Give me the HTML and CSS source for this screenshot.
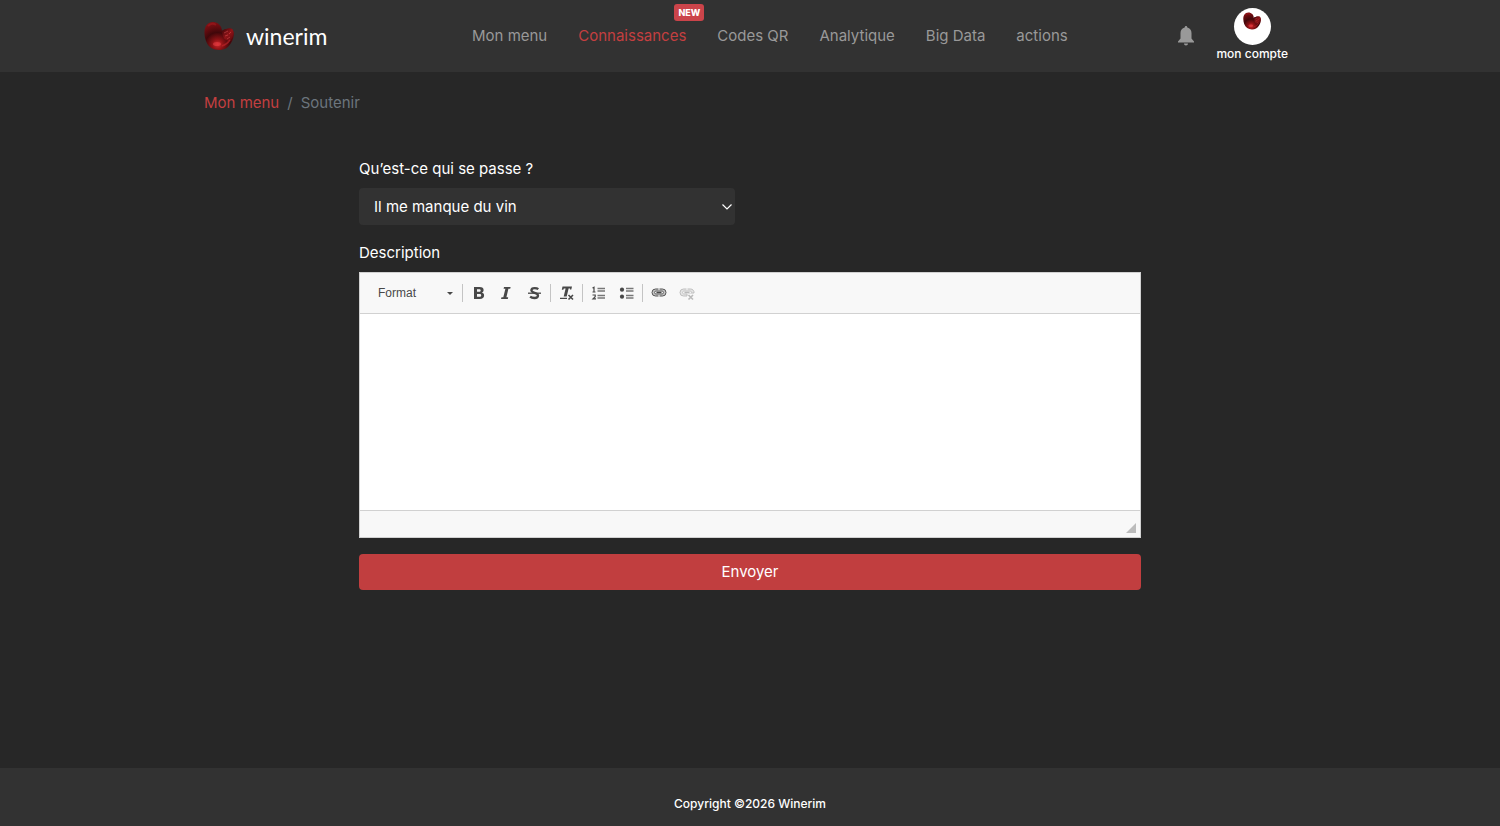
FILE: index.html
```html
<!DOCTYPE html>
<html lang="fr">
<head>
    <meta charset="UTF-8">
    <meta name="viewport" content="width=device-width, initial-scale=1.0">
    <title>Winerim - Soutenir</title>
    <link rel="stylesheet" href="styles.css">
</head>
<body>
    <!-- Shared logo drawing -->
    <svg class="defs" width="0" height="0" aria-hidden="true">
        <defs>
            <radialGradient id="lobe" cx="0.45" cy="0.8" r="0.85">
                <stop offset="0" stop-color="#d0282c"/>
                <stop offset="0.22" stop-color="#8c1215"/>
                <stop offset="0.5" stop-color="#40070a"/>
                <stop offset="0.8" stop-color="#6e0d11"/>
                <stop offset="1" stop-color="#8a1216"/>
            </radialGradient>
            <linearGradient id="side" x1="0" y1="0" x2="1" y2="1">
                <stop offset="0" stop-color="#3a0508"/>
                <stop offset="0.5" stop-color="#8f1418"/>
                <stop offset="1" stop-color="#5a080b"/>
            </linearGradient>
            <symbol id="logo" viewBox="0 0 30 30">
                <path fill="url(#lobe)" d="M9 1C14 1 18 5 18 10C20 8 25 7 28 8C31 11 30 18 27 22C24 27 20 29 15 29C9 29 4 26 2 20C-1 12 0 1 9 1Z"/>
                <path fill="url(#side)" d="M18 10C20 8 25 7 28 8C31 11 29 17 26 20C22 20 18 17 18 10Z"/>
                <path fill="none" stroke="#e05053" stroke-width="1" opacity="0.5" d="M20 12L24 10M21 15L24 14M25 13L27 11M23 18L26 16"/>
                <path fill="none" stroke="#a81c20" stroke-width="2" opacity="0.5" d="M4 5C6 3 9 2 12 4"/>
                <ellipse cx="13" cy="23" rx="4" ry="2" fill="#f0444a" opacity="0.5"/>
                <path fill="none" stroke="#c4262b" stroke-width="1.500" opacity="0.6" d="M18 25C21 24 24 22 26 19"/>
            </symbol>
        </defs>
    </svg>

    <header class="topbar">
        <div class="container topbar-inner">
            <a class="brand" href="#">
                <svg class="brand-logo" aria-hidden="true"><use href="#logo"/></svg>
                <span>winerim</span>
            </a>
            <nav class="menu">
                <a href="#">Mon menu</a>
                <a class="active" href="#">Connaissances<span class="badge">NEW</span></a>
                <a href="#">Codes QR</a>
                <a href="#">Analytique</a>
                <a href="#">Big Data</a>
                <a href="#">actions</a>
            </nav>
            <div class="user">
                <button class="bell" type="button" aria-label="Notifications">
                    <svg width="16" height="20" viewBox="0 0 16 20" fill="#999" aria-hidden="true">
                        <path d="M8 0C8.900 0 9.300 .6 9.300 1.500C12 2 13.500 4.300 13.500 7V12.500L16 15.500V16.500H0V15.500L2.500 12.500V7C2.500 4.300 4 2 6.700 1.500C6.700 .6 7.100 0 8 0ZM6 17.500H10C10 18.800 9.200 19.500 8 19.500S6 18.800 6 17.500Z"/>
                    </svg>
                </button>
                <a class="account" href="#">
                    <span class="avatar"><svg aria-hidden="true"><use href="#logo"/></svg></span>
                    <span>mon compte</span>
                </a>
            </div>
        </div>
    </header>

    <main class="container">
        <nav class="breadcrumb" aria-label="Fil d'Ariane">
            <a href="#">Mon menu</a>
            <span>/</span>
            <span>Soutenir</span>
        </nav>

        <form class="support-form">
            <label for="reason">Qu’est-ce qui se passe ?</label>
            <div class="select-box">
                <select id="reason">
                    <option>Il me manque du vin</option>
                </select>
                <svg width="10" height="6" viewBox="0 0 10 6" fill="none" stroke="#fff" stroke-width="1.200" aria-hidden="true"><path d="M.5 .5L5 5L9.500 .5"/></svg>
            </div>

            <label for="description">Description</label>
            <div class="editor">
                <div class="toolbar">
                    <div class="format-box">
                        <select aria-label="Format">
                            <option>Format</option>
                        </select>
                        <svg width="6" height="3" viewBox="0 0 6 3" aria-hidden="true"><path fill="#484848" d="M0 0H6L3 3Z"/></svg>
                    </div>
                    <span class="separator"></span>
                    <button type="button" aria-label="Gras">
                        <svg viewBox="0 0 16 16" aria-hidden="true"><path fill="#484848" fill-rule="evenodd" d="M3 2H8.500C11.500 2 12.600 3.200 12.600 5C12.600 6.400 11.900 7.200 10.800 7.600C12.300 8 13.100 9 13.100 10.500C13.100 12.800 11.500 14 8.800 14H3ZM6 4.200V6.700H8C9.200 6.700 9.700 6.300 9.700 5.400C9.700 4.600 9.200 4.200 8 4.200ZM6 8.900V11.800H8.300C9.600 11.800 10.200 11.300 10.200 10.300C10.200 9.300 9.600 8.900 8.300 8.900Z"/></svg>
                    </button>
                    <button type="button" aria-label="Italique">
                        <svg viewBox="0 0 16 16" aria-hidden="true"><path fill="#484848" d="M5 2H11.600L11.200 3.700H9.400L7.400 12.300H9.200L8.800 14H2L2.500 12.300H4.300L6.400 3.700H4.600Z"/></svg>
                    </button>
                    <button type="button" aria-label="Barré">
                        <svg viewBox="0 0 16 16" aria-hidden="true"><path fill="none" stroke="#484848" stroke-width="2.300" d="M11.300 4.200C10.300 3.400 9.200 3.100 7.700 3.100C5.600 3.100 4.400 3.900 4.400 5.300C4.400 8.300 11 7.300 11 10.500C11 12.200 9.600 13 7.400 13C5.600 13 4.200 12.600 3.100 11.700"/><path stroke="#484848" stroke-width="1.300" d="M1 8.200H14"/></svg>
                    </button>
                    <span class="separator"></span>
                    <button type="button" aria-label="Supprimer la mise en forme">
                        <svg viewBox="0 0 16 16" aria-hidden="true"><path fill="#484848" d="M3.500 1.500H13L12.300 4.500H11L11.100 3.400H9.600L7.700 11.500H4.700L6.600 3.400H4.900L4.300 4.700H2.800ZM1 12.800H8V14H1Z"/><path stroke="#484848" stroke-width="1.600" d="M9.500 10L14 14.500M14 10L9.500 14.500"/></svg>
                    </button>
                    <span class="separator"></span>
                    <button type="button" aria-label="Liste numérotée">
                        <svg viewBox="0 0 16 16" fill="none" stroke="#484848" aria-hidden="true"><path stroke-width="1.200" d="M1.500 3L3 2.300V7M1.500 7H4.500M1.500 10H4.200V11.700L2 13.900H5"/><path stroke="#777" stroke-width="1.500" d="M6.500 3.500H14M6.500 6H14M6.500 10.500H14M6.500 13H14"/></svg>
                    </button>
                    <button type="button" aria-label="Liste à puces">
                        <svg viewBox="0 0 16 16" aria-hidden="true"><circle cx="3" cy="4.700" r="2.100" fill="#484848"/><circle cx="3" cy="11.700" r="2.100" fill="#484848"/><path stroke="#777" stroke-width="1.500" d="M7 3.500H14.500M7 6H14.500M7 10.500H14.500M7 13H14.500"/></svg>
                    </button>
                    <span class="separator"></span>
                    <button type="button" aria-label="Lien">
                        <svg viewBox="0 0 16 16" fill="none" aria-hidden="true"><rect x="1" y="4" width="14" height="7" rx="3.500" fill="#c4c4c4" stroke="#555"/><path stroke="#f8f8f8" d="M8 3V5.500M8 9.500V12"/><rect x="3.500" y="6" width="9" height="3" rx="1.500" fill="#eee" stroke="#666"/><path stroke="#484848" stroke-width="1.600" d="M5.500 7.500H10.500"/></svg>
                    </button>
                    <button type="button" aria-label="Supprimer le lien" disabled>
                        <svg viewBox="0 0 16 16" fill="none" aria-hidden="true"><path fill="#c4c4c4" stroke="#555" d="M8 11H4.500A3.500 3.500 0 0 1 4.500 4H11.500A3.500 3.500 0 0 1 15 8H8Z"/><path stroke="#f8f8f8" d="M8 3V5.500"/><path fill="#eee" stroke="#666" d="M8 9H5C3 9 3 6 5 6H11C12.500 6 12.500 7 12.500 8"/><path stroke="#484848" stroke-width="1.600" d="M5.500 7.500H10.500M9.500 10L14 14.500M14 10L9.500 14.500"/></svg>
                    </button>
                </div>
                <textarea id="description"></textarea>
                <div class="editor-bottom">
                    <svg width="10" height="10" viewBox="0 0 10 10" aria-hidden="true"><path fill="#bcbcbc" d="M10 0V10H0Z"/></svg>
                </div>
            </div>

            <button class="send" type="submit">Envoyer</button>
        </form>
    </main>

    <footer>
        <p>Copyright ©2026 Winerim</p>
    </footer>
</body>
</html>
```
FILE: styles.css
```css
* {
    box-sizing: border-box;
}
body {
    margin: 0;
    min-height: 100vh;
    display: flex;
    flex-direction: column;
    font-family: Inter, Arial, sans-serif;
    font-size: 15px;
    line-height: 24px;
    background-color: #272727;
    color: white;
}
a {
    color: inherit;
    text-decoration: none;
}
.defs {
    position: absolute;
}
.container {
    width: 100%;
    max-width: 1140px;
    margin: 0 auto;
    padding: 0 24px;
}

/* Header */
.topbar {
    background-color: #323232;
}
.topbar-inner {
    display: flex;
    align-items: center;
    height: 72px;
}
.brand {
    display: flex;
    align-items: center;
    gap: 12px;
    width: 268px;
    font-family: Lato, sans-serif;
    font-size: 23px;
}
.brand-logo {
    width: 30px;
    height: 30px;
}
.menu {
    display: flex;
    gap: 31px;
    color: #999;
    white-space: nowrap;
}
.menu a {
    position: relative;
}
.menu .active {
    color: #c43f40;
}
.badge {
    position: absolute;
    right: -18px;
    top: -20px;
    padding: 0 4px;
    border-radius: 3px;
    background-color: #cb444a;
    color: white;
    font-size: 9px;
    font-weight: 800;
    line-height: 17px;
}
.user {
    display: flex;
    align-items: center;
    gap: 22px;
    margin-left: auto;
    margin-right: 8px;
}
.bell {
    display: flex;
    padding: 0;
    border: none;
    background: none;
    cursor: pointer;
}
.account {
    display: flex;
    flex-direction: column;
    align-items: center;
    padding-bottom: 2px;
    font-size: 12px;
    font-weight: 500;
    line-height: 18px;
}
.avatar {
    display: flex;
    justify-content: center;
    width: 37px;
    height: 37px;
    padding-top: 4px;
    border-radius: 50%;
    background-color: white;
}
.avatar svg {
    width: 18px;
    height: 18px;
}

/* Page */
.breadcrumb {
    display: flex;
    gap: 8px;
    padding: 19px 0 18px;
    color: #6c757d;
}
.breadcrumb a {
    color: #c43f40;
}
.support-form {
    max-width: 782px;
    margin: 24px auto;
}
.support-form label {
    display: block;
    margin-bottom: 7px;
}
.select-box {
    position: relative;
    width: 376px;
    max-width: 100%;
    margin-bottom: 16px;
}
.select-box select {
    display: block;
    width: 100%;
    height: 37px;
    padding: 0 15px;
    border: none;
    border-radius: 4px;
    appearance: none;
    background-color: #323232;
    color: white;
    font: inherit;
}
.select-box svg {
    position: absolute;
    right: 3px;
    top: 16px;
    pointer-events: none;
}

/* Editor */
.editor {
    border: 1px solid #d1d1d1;
    background-color: white;
}
.toolbar {
    display: flex;
    align-items: center;
    height: 41px;
    padding-left: 18px;
    border-bottom: 1px solid #d1d1d1;
    background-color: #f8f8f8;
}
.format-box {
    position: relative;
    width: 83px;
}
.format-box select {
    display: block;
    width: 100%;
    padding: 0;
    border: none;
    appearance: none;
    background: none;
    color: #484848;
    font: 12px "Liberation Sans", Arial, sans-serif;
}
.format-box svg {
    position: absolute;
    right: 8px;
    top: 6px;
    pointer-events: none;
}
.separator {
    width: 1px;
    height: 18px;
    margin: 0 2px 0 1px;
    background-color: #c4c4c4;
}
.toolbar button {
    display: flex;
    padding: 0 6px;
    border: none;
    background: none;
    cursor: pointer;
}
.toolbar button:disabled {
    opacity: 0.35;
    cursor: default;
}
.toolbar button svg {
    width: 16px;
    height: 16px;
}
.editor textarea {
    display: block;
    width: 100%;
    height: 196px;
    padding: 20px;
    border: none;
    outline: none;
    resize: none;
    background-color: white;
    color: #333;
    font: 13px "Liberation Sans", Arial, sans-serif;
}
.editor-bottom {
    display: flex;
    justify-content: flex-end;
    align-items: flex-end;
    height: 27px;
    padding: 4px;
    border-top: 1px solid #d1d1d1;
    background-color: #f8f8f8;
}
.send {
    display: block;
    width: 100%;
    height: 36px;
    margin-top: 16px;
    border: none;
    border-radius: 4px;
    background-color: #c13e3f;
    color: white;
    font: inherit;
    cursor: pointer;
}

footer {
    margin-top: auto;
    padding: 24px 0 10px;
    background-color: #323232;
    text-align: center;
    font-size: 12px;
    font-weight: 500;
}
footer p {
    margin: 0;
}
```
